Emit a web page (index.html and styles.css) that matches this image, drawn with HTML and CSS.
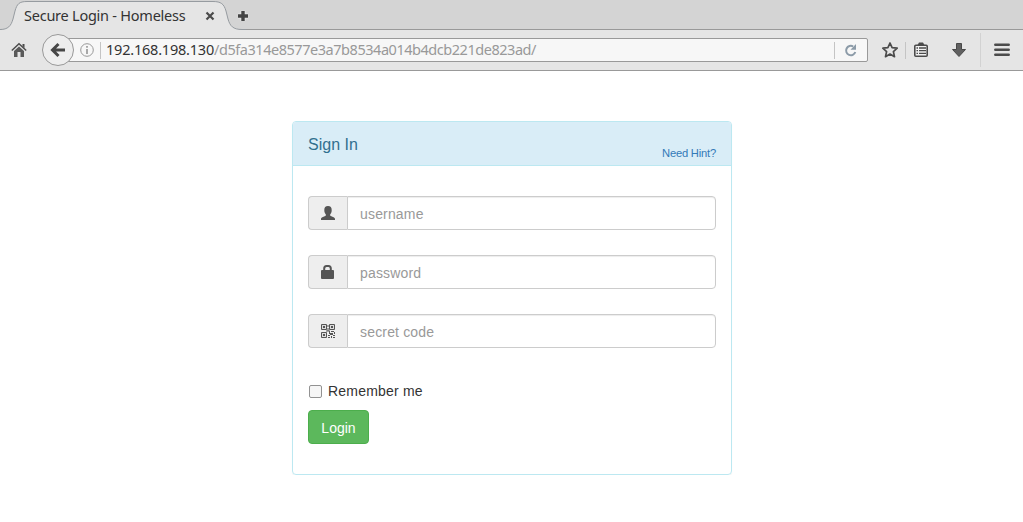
FILE: index.html
```
<!DOCTYPE html>
<html lang="en">
<head>
<meta charset="utf-8">
<title>Secure Login - Homeless</title>
<link rel="stylesheet" href="styles.css">
</head>
<body>
<header class="browser">
  <div class="tabs">
    <div class="tab">
      <svg class="tab-shape" width="246" height="30" viewBox="0 0 246 30">
        <path d="M0 30V29.500C8 29.500 11 26 13 19L15 11C17 4 19 1.500 27 1.500H213C221 1.500 224 4 226 11L228 19C230 26 233 29.500 242 29.500H246V30Z" fill="#e5e5e5"/>
        <path d="M0 29.500C8 29.500 11 26 13 19L15 11C17 4 19 1.500 27 1.500H213C221 1.500 224 4 226 11L228 19C230 26 233 29.500 242 29.500H246" fill="none" stroke="#969ba0"/>
      </svg>
      <span class="tab-title">Secure Login - Homeless</span>
      <svg class="tab-close" width="10" height="10" viewBox="0 0 10 10"><path d="M1.500 1.500L8.500 8.500M8.500 1.500L1.500 8.500" stroke="#4a4a4a" stroke-width="2.200"/></svg>
    </div>
    <svg class="tab-new" width="12" height="12" viewBox="0 0 12 12"><path d="M6 .8V11M.8 6H11.200" stroke="#fff" stroke-width="5" opacity=".45"/><path d="M6 1V11M1 6H11" stroke="#444" stroke-width="3.400"/></svg>
  </div>
  <div class="toolbar">
    <svg class="home" width="16" height="16" viewBox="0 0 16 16"><path d="M.8 8.500L8 1.800L15.200 8.500" fill="none" stroke="#4b4b4b" stroke-width="1.500"/><path d="M11.500 2H13.500V6L11.500 4Z" fill="#4b4b4b"/><path d="M3 9L8 4.600L13 9V15H9.500V10H6.500V15H3Z" fill="#5a5a5a"/></svg>
    <svg class="back" width="34" height="34" viewBox="0 0 34 34"><circle cx="17" cy="17" r="15.500" fill="#eee" stroke="#999"/><path d="M24 17H12.500M17.500 11L11.500 17L17.500 23" fill="none" stroke="#474747" stroke-width="3"/></svg>
    <div class="urlbar">
      <svg class="info" width="14" height="14" viewBox="0 0 14 14"><circle cx="7" cy="7" r="6.300" fill="none" stroke="#999"/><path d="M7 6V11M7 3V4.700" stroke="#8e8e8e" stroke-width="1.500"/></svg>
      <i class="rule"></i>
      <span class="address"><span class="host">192.168.198.130</span><span class="path">/d5fa314e8577e3a7b8534a014b4dcb221de823ad/</span></span>
      <i class="rule"></i>
      <svg class="reload" width="14" height="14" viewBox="0 0 14 14"><path d="M11.300 9A4.700 4.700 0 1 1 9.200 3.500" fill="none" stroke="#8c9ba8" stroke-width="2"/><path d="M12 1V6.800H6.500Z" fill="#8c9ba8"/></svg>
    </div>
    <svg class="star" width="18" height="18" viewBox="0 0 18 18"><path d="M9 2L11.100 6.700L16.200 7.200L12.400 10.600L13.500 15.700L9 13L4.500 15.700L5.600 10.600L1.800 7.200L6.900 6.700Z" fill="none" stroke="#4b4b4b" stroke-width="1.700" stroke-linejoin="round"/></svg>
    <i class="rule rule-star"></i>
    <svg class="clip" width="14" height="16" viewBox="0 0 14 16"><path d="M3.500 3L5 .5H9L10.500 3Z" fill="#4b4b4b"/><rect x=".8" y="3.300" width="12.400" height="11" rx="1" fill="#f1f1f1" stroke="#4b4b4b" stroke-width="1.600"/><path d="M2.500 6H4M5 6H12M2.500 8.700H4M5 8.700H12M2.500 11.400H4M5 11.400H12" stroke="#4b4b4b" stroke-width="1.300"/></svg>
    <svg class="download" width="14" height="14" viewBox="0 0 14 14"><path d="M4.500 .5H9.500V6.500H13.500L7 13.500L.5 6.500H4.500Z" fill="#606060" stroke="#484848"/></svg>
    <i class="rule rule-menu"></i>
    <svg class="menu" width="16" height="14" viewBox="0 0 16 14"><path d="M1.300 1.700H14.700M1.300 6.700H14.700M1.300 11.700H14.700" stroke="#4b4b4b" stroke-width="2.500" stroke-linecap="round"/></svg>
  </div>
</header>
<main class="page">
  <section class="panel">
    <div class="panel-heading">
      <div class="panel-title">Sign In</div>
      <a class="hint">Need Hint?</a>
    </div>
    <form class="panel-body">
      <div class="group">
        <span class="addon"><svg width="14" height="14" viewBox="0 0 14 14"><path d="M7 0C9.600 0 10.700 1.300 10.700 4C10.700 6 10.200 7.400 9.200 8.300V9.400C10 10.500 14 10.800 14 13V14H0V13C0 10.800 4 10.500 4.800 9.400V8.300C3.800 7.400 3.300 6 3.300 4C3.300 1.300 4.400 0 7 0Z" fill="#555"/></svg></span>
        <input class="field" type="text" placeholder="username">
      </div>
      <div class="group">
        <span class="addon"><svg width="14" height="14" viewBox="0 0 14 14"><path d="M3.200 6V3.500C3.200 1.700 4.400 1 5.500 1H7.500C8.600 1 9.800 1.700 9.800 3.500V6" fill="none" stroke="#555" stroke-width="2"/><rect x="0" y="5" width="13" height="9" rx="1" fill="#555"/></svg></span>
        <input class="field" type="password" placeholder="password">
      </div>
      <div class="group">
        <span class="addon"><svg width="14" height="14" viewBox="0 0 14 14"><path d="M.5 .5H5.500V5.500H.5ZM8.500 .5H13.500V5.500H8.500ZM.5 8.500H5.500V13.500H.5Z" fill="#ddd" stroke="#555"/><path d="M2 2H4V4H2ZM10 2H12V4H10ZM2 10H4V12H2ZM6.500 1H7.500V3H6.500ZM6.500 4H7.500V7H6.500ZM5 6.500H9V7.500H5ZM8 7H9V10H8ZM10 7H13V8H10ZM9 9H12V11H9ZM13 8H14V10H13ZM7 11H9V12H7ZM10 12H11V14H10ZM12 11H14V12H12ZM12 13H14V14H12ZM7 13H9V14H7Z" fill="#555"/></svg></span>
        <input class="field" type="text" placeholder="secret code">
      </div>
      <label class="remember"><input class="check" type="checkbox">Remember me</label>
      <button class="login" type="button">Login</button>
    </form>
  </section>
</main>
</body>
</html>
```
FILE: styles.css
```
* { box-sizing: border-box; }
body {
  margin: 0;
  background: #fff;
  color: #333;
  font: 14px/20px "Liberation Sans", Arial, sans-serif;
  overflow: hidden;
}
svg { display: block; flex: none; }
.browser { font-family: "Noto Sans", sans-serif; }
.tabs {
  display: flex;
  height: 30px;
  background: #d4d4d4;
  border-bottom: 1px solid #999;
}
.tab {
  position: relative;
  display: flex;
  width: 237px;
  height: 30px;
  padding-left: 24px;
}
.tab-shape { position: absolute; left: 0; top: 0; }
.tab-title {
  position: relative;
  width: 181px;
  padding-top: 5px;
  font-size: 14.500px;
  letter-spacing: -.24px;
  white-space: nowrap;
}
.tab-close { position: relative; margin-top: 11px; }
.tab-new { position: relative; margin-top: 10px; }
.toolbar {
  display: flex;
  align-items: center;
  height: 41px;
  background: #e5e5e5;
  border-bottom: 1px solid #999;
}
.home { margin-left: 11px; }
.back { position: relative; margin-left: 14px; }
.urlbar {
  display: flex;
  align-items: center;
  width: 808px;
  height: 24px;
  margin-left: -15px;
  padding-left: 19px;
  background: #f7f7f7;
  border: 1px solid #999;
  border-radius: 2px;
}
.rule { flex: none; width: 1px; height: 17px; background: #c4c4c4; }
.info { margin-right: 6px; }
.address {
  width: 733px;
  padding: 0 0 2px 5px;
  font-size: 14.500px;
  white-space: nowrap;
}
.host { color: #333; letter-spacing: -.21px; }
.path { color: #999; letter-spacing: -.46px; }
.reload { margin-left: 9px; }
.star { margin-left: 13px; }
.rule-star { margin-left: 6px; }
.clip { margin-left: 8px; }
.download { margin-left: 24px; }
.rule-menu { height: 34px; margin-left: 14px; background: #d2d2d2; }
.menu { margin-left: 13px; }
.page { padding: 50px 0 0 292px; }
.panel {
  width: 440px;
  height: 354px;
  border: 1px solid #bce8f1;
  border-radius: 4px;
  box-shadow: 0 1px 1px rgba(0, 0, 0, .05);
}
.panel-heading {
  display: flex;
  justify-content: space-between;
  height: 44px;
  padding: 0 15px;
  background: #d9edf7;
  border-bottom: 1px solid #bce8f1;
  border-radius: 3px 3px 0 0;
}
.panel-title { padding-top: 14px; color: #31708f; font-size: 16px; line-height: 18px; }
.hint { padding-top: 21px; color: #337ab7; font-size: 11.200px; letter-spacing: -.2px; }
.panel-body { padding: 30px 15px 0; }
.group { display: flex; height: 34px; margin-bottom: 25px; }
.addon {
  display: flex;
  align-items: center;
  width: 39px;
  padding-left: 12px;
  background: #eee;
  border: 1px solid #ccc;
  border-right: 0;
  border-radius: 4px 0 0 4px;
}
.field {
  flex: 1;
  min-width: 0;
  padding: 8px 12px 6px;
  border: 1px solid #ccc;
  border-radius: 0 4px 4px 0;
  box-shadow: inset 0 1px 1px rgba(0, 0, 0, .075);
  background: #fff;
  font: 14px/20px "Liberation Sans", Arial, sans-serif;
  letter-spacing: .17px;
}
.field::placeholder { color: #999; opacity: 1; }
.remember {
  display: flex;
  align-items: center;
  width: max-content;
  margin-top: 33px;
  letter-spacing: .2px;
}
.check {
  appearance: none;
  width: 13px;
  height: 13px;
  margin: 1px 6px 0 1px;
  border: 1px solid #929292;
  border-radius: 2px;
  background: #f6f6f6;
}
.login {
  display: block;
  width: 61px;
  height: 34px;
  margin-top: 9px;
  padding: 2px 0 0;
  border: 1px solid #4cae4c;
  border-radius: 4px;
  background: #5cb85c;
  color: #fff;
  font: 14px/20px "Liberation Sans", Arial, sans-serif;
}
```
